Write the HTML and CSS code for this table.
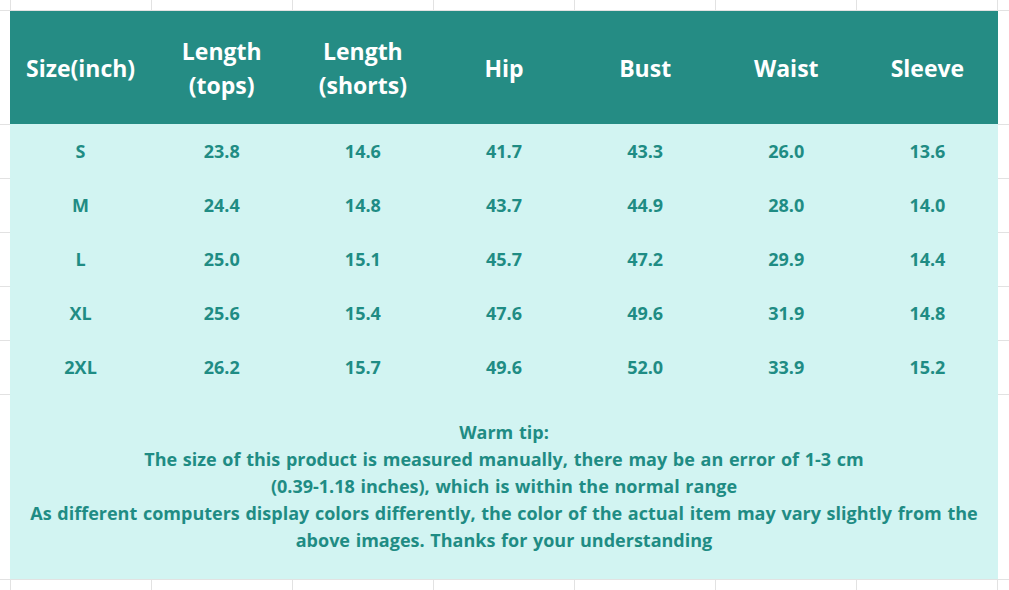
FILE: index.html
```html
<!DOCTYPE html>
<html lang="en">
<head>
<meta charset="utf-8">
<title>Size chart</title>
<link rel="stylesheet" href="styles.css">
</head>
<body>
<div class="sheet">
  <div class="chart">
    <div class="row head">
      <div class="cell">Size(inch)</div>
      <div class="cell">Length<br>(tops)</div>
      <div class="cell">Length<br>(shorts)</div>
      <div class="cell">Hip</div>
      <div class="cell">Bust</div>
      <div class="cell">Waist</div>
      <div class="cell">Sleeve</div>
    </div>
    <div class="row data">
      <div class="cell">S</div><div class="cell">23.8</div><div class="cell">14.6</div><div class="cell">41.7</div><div class="cell">43.3</div><div class="cell">26.0</div><div class="cell">13.6</div>
    </div>
    <div class="row data">
      <div class="cell">M</div><div class="cell">24.4</div><div class="cell">14.8</div><div class="cell">43.7</div><div class="cell">44.9</div><div class="cell">28.0</div><div class="cell">14.0</div>
    </div>
    <div class="row data">
      <div class="cell">L</div><div class="cell">25.0</div><div class="cell">15.1</div><div class="cell">45.7</div><div class="cell">47.2</div><div class="cell">29.9</div><div class="cell">14.4</div>
    </div>
    <div class="row data">
      <div class="cell">XL</div><div class="cell">25.6</div><div class="cell">15.4</div><div class="cell">47.6</div><div class="cell">49.6</div><div class="cell">31.9</div><div class="cell">14.8</div>
    </div>
    <div class="row data">
      <div class="cell">2XL</div><div class="cell">26.2</div><div class="cell">15.7</div><div class="cell">49.6</div><div class="cell">52.0</div><div class="cell">33.9</div><div class="cell">15.2</div>
    </div>
    <div class="tip">
      <p>Warm tip:<br>
      The size of this product is measured manually, there may be an error of 1-3 cm<br>
      (0.39-1.18 inches), which is within the normal range<br>
      As different computers display colors differently, the color of the actual item may vary slightly from the<br>
      above images. Thanks for your understanding</p>
    </div>
  </div>
</div>
</body>
</html>
```
FILE: styles.css
```css
html, body {
  margin: 0;
  padding: 0;
}
body {
  width: 1009px;
  height: 590px;
  overflow: hidden;
  background-color: #ffffff;
  font-family: "Open Sans", "Noto Sans", sans-serif;
  font-weight: 700;
}
.sheet {
  width: 1009px;
  height: 590px;
  box-sizing: border-box;
  padding: 11px 11px 0 10px;
  background-image:
    linear-gradient(#e2e2e2, #e2e2e2),
    linear-gradient(#e2e2e2, #e2e2e2),
    linear-gradient(#e2e2e2, #e2e2e2),
    linear-gradient(#e2e2e2, #e2e2e2),
    linear-gradient(#e2e2e2, #e2e2e2),
    linear-gradient(#e2e2e2, #e2e2e2),
    linear-gradient(#e2e2e2, #e2e2e2),
    linear-gradient(#e2e2e2, #e2e2e2),
    repeating-linear-gradient(to right, #e2e2e2 0, #e2e2e2 1px, transparent 1px, transparent 141px);
  background-size:
    100% 1px, 100% 1px, 100% 1px, 100% 1px,
    100% 1px, 100% 1px, 100% 1px, 100% 1px,
    100% 100%;
  background-position:
    0 10px, 0 124px, 0 178px, 0 232px,
    0 286px, 0 340px, 0 394px, 0 579px,
    10px 0;
  background-repeat: no-repeat;
}
.chart {
  width: 988px;
  background: #d2f4f2;
}
.row {
  display: grid;
  grid-template-columns: repeat(7, 1fr);
}
.cell {
  display: flex;
  align-items: center;
  justify-content: center;
  text-align: center;
}
.head {
  height: 113px;
  background: #258c84;
  color: #ffffff;
  font-size: 23px;
  line-height: 34px;
}
.data {
  height: 54px;
  color: #1f8c84;
  font-size: 18px;
}
.tip {
  height: 185px;
  display: flex;
  align-items: center;
  justify-content: center;
  color: #1f8c84;
  font-size: 18px;
  line-height: 27px;
  word-spacing: 1px;
  text-align: center;
}
.tip p {
  margin: 0;
}
```
